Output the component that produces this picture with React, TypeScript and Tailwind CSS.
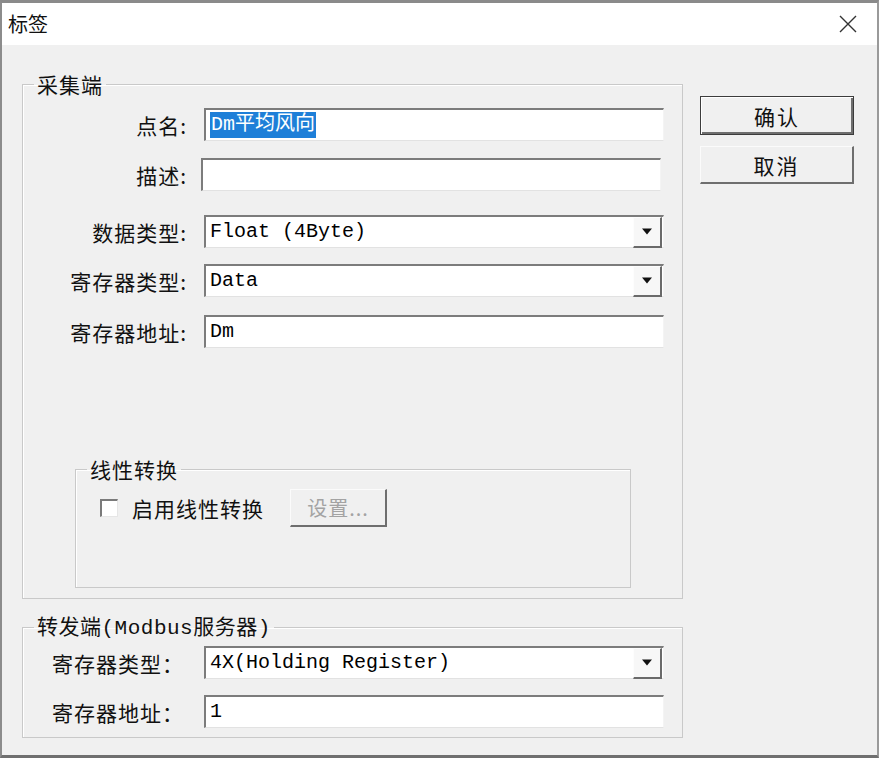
import React from "react";

const cjk = { fontFamily: '"Noto Sans CJK SC", "Noto Sans", sans-serif' };
const mono = { fontFamily: '"Liberation Mono", "Noto Sans CJK SC", monospace' };

function Sunken({ children, className = "" }: { children?: React.ReactNode; className?: string }) {
  return (
    <div
      className={
        "flex items-center bg-white border-t-2 border-l-2 border-t-[#7c7c7c] border-l-[#7c7c7c] border-b border-r border-b-[#e2e2e2] border-r-[#f4f4f4] " +
        className
      }
    >
      {children}
    </div>
  );
}

function Field({ text, className = "", selected = false }: { text?: string; className?: string; selected?: boolean }) {
  return (
    <Sunken className={"w-[460px] h-[33px] pl-[4px] " + className}>
      {text ? (
        <span
          className={"text-[20px] leading-[26px] " + (selected ? "bg-[#1e7fd8] text-white px-[1px]" : "text-black")}
          style={mono}
        >
          {text}
        </span>
      ) : null}
    </Sunken>
  );
}

function Select({ text, className = "" }: { text: string; className?: string }) {
  return (
    <Sunken className={"w-[460px] h-[33px] pl-[4px] pr-[1px] justify-between " + className}>
      <span className="text-[20px] leading-[26px] text-black" style={mono}>
        {text}
      </span>
      <div className="w-[29px] h-[31px] bg-[#f7f7f7] border-r-2 border-b-2 border-r-[#6a6a6a] border-b-[#6a6a6a] border-l border-t border-l-[#fdfdfd] border-t-[#fdfdfd] flex items-center justify-center">
        <svg width="12" height="7" viewBox="0 0 12 7">
          <path d="M1 0.5 L11 0.5 L6 6.5 Z" fill="#111" />
        </svg>
      </div>
    </Sunken>
  );
}

function Label({ text, className = "" }: { text: string; className?: string }) {
  return (
    <div className={"text-[21px] leading-[26px] text-[#111] tracking-[1px] " + className} style={cjk}>
      {text}
    </div>
  );
}

function Row1({ label, children, gap = 17 }: { label: string; children: React.ReactNode; gap?: number }) {
  return (
    <div className="flex items-center">
      <Label text={label} className="w-[164px] text-right" />
      <div style={{ width: gap }} />
      {children}
    </div>
  );
}

export default function App() {
  return (
    <div className="w-[879px] h-[758px] flex flex-col bg-[#f0f0f0] border-t-[3px] border-t-[#8a8a8a] border-l-2 border-l-[#8c8c8c] border-r-2 border-r-[#9a9a9a] border-b-[3px] border-b-[#6f6f6f] overflow-hidden">
      {/* Title bar */}
      <div className="h-[42px] bg-white flex items-center justify-between pl-[6px] pr-[20px] shrink-0">
        <span className="text-[20px] leading-[26px] text-[#111]" style={cjk}>
          标签
        </span>
        <svg width="18" height="18" viewBox="0 0 18 18">
          <path d="M1 1 L17 17 M17 1 L1 17" stroke="#333" strokeWidth="1.4" fill="none" />
        </svg>
      </div>

      {/* Body */}
      <div className="flex pl-[20px] pt-[26px]">
        <div className="flex flex-col w-[661px]">
          {/* 采集端 */}
          <fieldset className="h-[528px] border border-[#c9c9c9] shadow-[inset_1px_1px_0_#ffffff] pl-0 pr-0">
            <legend className="ml-[11px] px-[3px] text-[21px] leading-[26px] text-[#111] tracking-[1px]" style={cjk}>
              采集端
            </legend>
            <div className="flex flex-col">
              <div className="mt-[11px]">
                <Row1 label="点名:">
                  <Field text="Dm平均风向" selected />
                </Row1>
              </div>
              <div className="mt-[17px]">
                <Row1 label="描述:" gap={14}>
                  <Field />
                </Row1>
              </div>
              <div className="mt-[24px]">
                <Row1 label="数据类型:">
                  <Select text="Float (4Byte)" />
                </Row1>
              </div>
              <div className="mt-[16px]">
                <Row1 label="寄存器类型:">
                  <Select text="Data" />
                </Row1>
              </div>
              <div className="mt-[18px]">
                <Row1 label="寄存器地址:">
                  <Field text="Dm" className="h-[32px]" />
                </Row1>
              </div>

              {/* 线性转换 */}
              <fieldset className="mt-[108px] ml-[52px] w-[556px] h-[132px] border border-[#c9c9c9] shadow-[inset_1px_1px_0_#ffffff]">
                <legend className="ml-[11px] px-[3px] text-[21px] leading-[26px] text-[#111] tracking-[1px]" style={cjk}>
                  线性转换
                </legend>
                <div className="flex items-center pl-[24px] mt-[7px]">
                  <div className="w-[18px] h-[18px] bg-white border-t-2 border-l-2 border-t-[#7a7a7a] border-l-[#7a7a7a] border-b border-r border-b-[#e6e6e6] border-r-[#e6e6e6]" />
                  <Label text="启用线性转换" className="ml-[14px]" />
                  <button className="ml-[26px] w-[97px] h-[38px] bg-[#f0f0f0] border-t border-l border-t-[#fbfbfb] border-l-[#fbfbfb] border-r-2 border-b-2 border-r-[#6e6e6e] border-b-[#6e6e6e] text-[20px] leading-[26px] text-[#a3a3a3] tracking-[1px]" style={cjk}>
                    设置...
                  </button>
                </div>
              </fieldset>
            </div>
          </fieldset>

          {/* 转发端 */}
          <fieldset className="mt-[13px] h-[126px] border border-[#c9c9c9] shadow-[inset_1px_1px_0_#ffffff]">
            <legend className="ml-[11px] px-[3px] text-[21px] leading-[26px] text-[#111] tracking-[0.5px]" style={cjk}>
              转发端<span style={mono}>(Modbus</span>服务器<span style={mono}>)</span>
            </legend>
            <div className="flex flex-col pl-[29px]">
              <div className="flex items-center mt-[4px]">
                <Label text="寄存器类型：" className="w-[152px]" />
                <Select text="4X(Holding Register)" />
              </div>
              <div className="flex items-center mt-[16px]">
                <Label text="寄存器地址：" className="w-[152px]" />
                <Field text="1" className="h-[32px]" />
              </div>
            </div>
          </fieldset>
        </div>

        {/* Buttons */}
        <div className="flex flex-col ml-[17px] mt-[25px]">
          <button className="w-[154px] h-[39px] bg-[#f0f0f0] border border-[#3c3c3c] shadow-[inset_1px_1px_0_#ffffff,inset_-2px_-2px_0_#6e6e6e] text-[21px] leading-[26px] text-[#111] tracking-[2px]" style={cjk}>
            确认
          </button>
          <button className="mt-[11px] w-[154px] h-[38px] bg-[#f0f0f0] border-t border-l border-t-[#fbfbfb] border-l-[#fbfbfb] border-r-2 border-b-2 border-r-[#6e6e6e] border-b-[#6e6e6e] text-[21px] leading-[26px] text-[#111] tracking-[2px]" style={cjk}>
            取消
          </button>
        </div>
      </div>
    </div>
  );
}
